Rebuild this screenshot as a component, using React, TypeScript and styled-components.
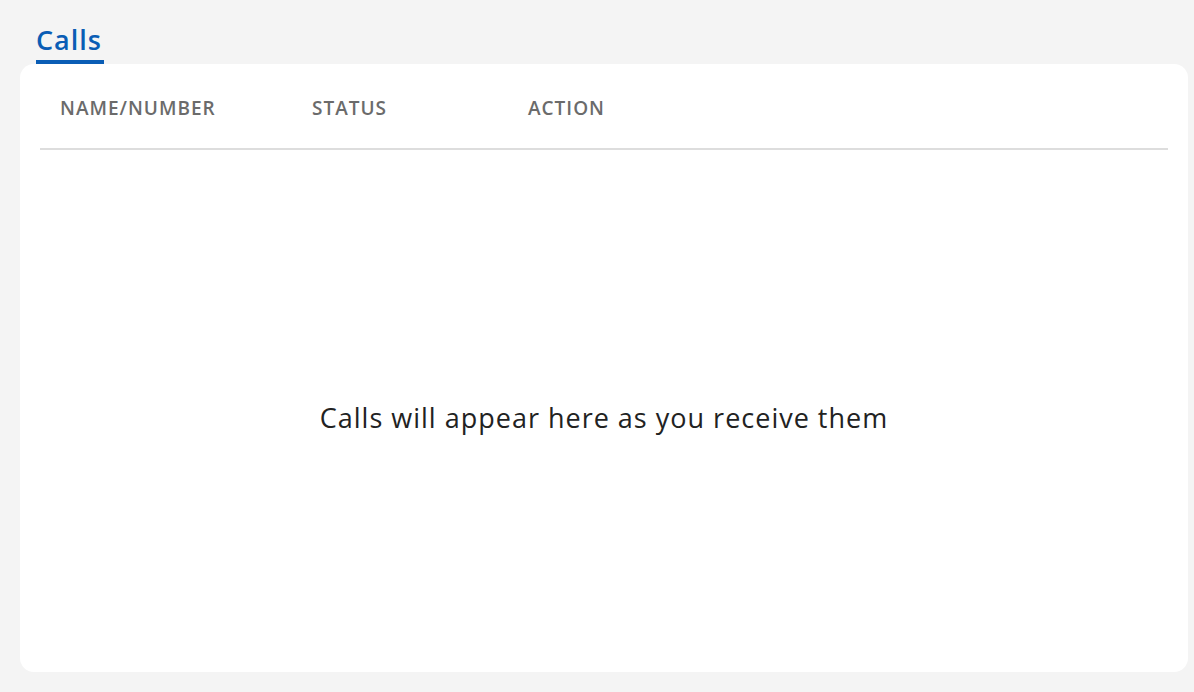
import React from 'react'
import styled, { createGlobalStyle } from 'styled-components'

const GlobalStyle = createGlobalStyle`
    html, body {
        margin: 0;
        padding: 0;
        background: #f4f4f4;
        font-family: "Open Sans", "Noto Sans", sans-serif;
    }
`

type ColumnProp = {
    width: number
}

const columns = [
    { id: 1, name: 'NAME/NUMBER', width: 252 },
    { id: 2, name: 'STATUS', width: 216 },
    { id: 3, name: 'ACTION', width: 200 },
]

const App = () => {
    return (
        <>
            <GlobalStyle />
            <Page>
                <TabBar>
                    <Tab>Calls</Tab>
                </TabBar>
                <Card>
                    <HeaderRow>
                        {columns.map(col => (
                            <HeaderCell key={col.id} width={col.width}>{col.name}</HeaderCell>
                        ))}
                    </HeaderRow>
                    <EmptyState>Calls will appear here as you receive them</EmptyState>
                </Card>
            </Page>
        </>
    )
}

const Page = styled.div`
    display: flex;
    flex-direction: column;
    height: 692px;
    box-sizing: border-box;
    padding: 0 6px 20px 20px;
`

const TabBar = styled.div`
    display: flex;
    height: 64px;
    align-items: flex-end;
    padding-left: 16px;
`

const Tab = styled.div`
    font-size: 27px;
    font-weight: 600;
    color: #0a5db5;
    letter-spacing: 1px;
    line-height: 38px;
    padding-right: 2px;
    padding-bottom: 1px;
    border-bottom: 4px solid #0a5db5;
`

const Card = styled.div`
    flex: 1;
    display: flex;
    flex-direction: column;
    background: #fff;
    border-radius: 14px;
    padding: 0 20px;
`

const HeaderRow = styled.div`
    display: flex;
    align-items: center;
    height: 86px;
    padding-left: 20px;
    padding-top: 4px;
    box-sizing: border-box;
    border-bottom: 2px solid #dddddd;
`

const HeaderCell = styled.div<ColumnProp>`
    width: ${(prop) => prop.width}px;
    font-size: 19px;
    font-weight: 600;
    color: #6b6b6b;
    letter-spacing: 1px;
`

const EmptyState = styled.div`
    flex: 1;
    display: flex;
    align-items: center;
    justify-content: center;
    padding-top: 12px;
    font-size: 27px;
    letter-spacing: 1px;
    color: #222;
`

export default App
